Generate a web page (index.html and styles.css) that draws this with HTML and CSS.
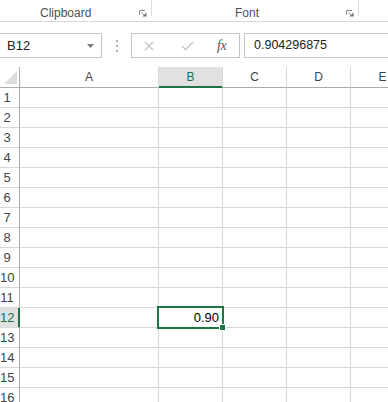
FILE: index.html
```html
<!DOCTYPE html>
<html>
<head>
<meta charset="utf-8">
<link rel="stylesheet" href="styles.css">
</head>
<body>
<div class="ribbon">
  <div class="group g-clip">
    <span class="glabel">Clipboard</span>
    <svg class="launcher" width="8" height="7" viewBox="0 0 8 7"><path d="M0.5 5 V0.5 H6" fill="none" stroke="#8a8a8a"/><path d="M2.5 2.5 L6 6" stroke="#8a8a8a"/><path d="M7.5 2.5 V6.5 H3.5 Z" fill="#6e6e6e"/></svg>
  </div>
  <div class="sep"></div>
  <div class="group g-font">
    <span class="glabel">Font</span>
    <svg class="launcher" width="8" height="7" viewBox="0 0 8 7"><path d="M0.5 5 V0.5 H6" fill="none" stroke="#8a8a8a"/><path d="M2.5 2.5 L6 6" stroke="#8a8a8a"/><path d="M7.5 2.5 V6.5 H3.5 Z" fill="#6e6e6e"/></svg>
  </div>
  <div class="sep"></div>
</div>

<div class="fbar">
  <div class="namebox">
    <span class="nbtext">B12</span>
    <svg class="nbarrow" width="7" height="4" viewBox="0 0 7 4"><path d="M0 0 H7 L3.5 4 Z" fill="#7a7a7a"/></svg>
  </div>
  <div class="dots"><span></span><span></span><span></span></div>
  <div class="fbtns">
    <svg class="ico" width="10" height="10" viewBox="0 0 10 10"><path d="M1 1 L9 9 M9 1 L1 9" stroke="#c4c4c4" stroke-width="1.3" fill="none"/></svg>
    <svg class="ico" width="13" height="10" viewBox="0 0 13 10"><path d="M1 5 L4.5 8.5 L12 1" stroke="#c4c4c4" stroke-width="1.4" fill="none"/></svg>
    <span class="fx">fx</span>
  </div>
  <div class="finput">0.904296875</div>
</div>

<div class="grid">
  <div class="corner"><svg width="19" height="20" viewBox="0 0 19 20"><path d="M17 4 V17 H4 Z" fill="#dcdcdc"/></svg></div>
  <div class="ch">A</div><div class="ch sel">B</div><div class="ch">C</div><div class="ch">D</div><div class="ch">E</div>

  <div class="rh">1</div><div class="c"></div><div class="c"></div><div class="c"></div><div class="c"></div><div class="c"></div>
  <div class="rh">2</div><div class="c"></div><div class="c"></div><div class="c"></div><div class="c"></div><div class="c"></div>
  <div class="rh">3</div><div class="c"></div><div class="c"></div><div class="c"></div><div class="c"></div><div class="c"></div>
  <div class="rh">4</div><div class="c"></div><div class="c"></div><div class="c"></div><div class="c"></div><div class="c"></div>
  <div class="rh">5</div><div class="c"></div><div class="c"></div><div class="c"></div><div class="c"></div><div class="c"></div>
  <div class="rh">6</div><div class="c"></div><div class="c"></div><div class="c"></div><div class="c"></div><div class="c"></div>
  <div class="rh">7</div><div class="c"></div><div class="c"></div><div class="c"></div><div class="c"></div><div class="c"></div>
  <div class="rh">8</div><div class="c"></div><div class="c"></div><div class="c"></div><div class="c"></div><div class="c"></div>
  <div class="rh">9</div><div class="c"></div><div class="c"></div><div class="c"></div><div class="c"></div><div class="c"></div>
  <div class="rh">10</div><div class="c"></div><div class="c"></div><div class="c"></div><div class="c"></div><div class="c"></div>
  <div class="rh">11</div><div class="c"></div><div class="c"></div><div class="c"></div><div class="c"></div><div class="c"></div>
  <div class="rh sel">12</div><div class="c"></div><div class="c active">0.90<span class="handle"></span></div><div class="c"></div><div class="c"></div><div class="c"></div>
  <div class="rh">13</div><div class="c"></div><div class="c"></div><div class="c"></div><div class="c"></div><div class="c"></div>
  <div class="rh">14</div><div class="c"></div><div class="c"></div><div class="c"></div><div class="c"></div><div class="c"></div>
  <div class="rh">15</div><div class="c"></div><div class="c"></div><div class="c"></div><div class="c"></div><div class="c"></div>
  <div class="rh">16</div><div class="c"></div><div class="c"></div><div class="c"></div><div class="c"></div><div class="c"></div>
</div>
</body>
</html>
```
FILE: styles.css
```css
html, body {
  margin: 0;
  padding: 0;
  background: #ffffff;
  overflow: hidden;
  width: 388px;
  height: 402px;
}
body {
  font-family: "Liberation Sans", Arial, sans-serif;
  color: #444;
}

/* ribbon */
.ribbon {
  display: flex;
  height: 21px;
  border-bottom: 1px solid #d6d6d6;
}
.group {
  display: flex;
  align-items: flex-start;
  box-sizing: border-box;
  height: 21px;
}
.g-clip { width: 151px; padding-left: 40px; }
.g-font { width: 206px; padding-left: 83px; }
.glabel {
  font-size: 12px;
  line-height: 14px;
  margin-top: 6px;
  color: #505050;
}
.launcher {
  margin-left: auto;
  margin-right: 4px;
  margin-top: 10px;
}
.sep {
  width: 1px;
  height: 16px;
  background: #dadada;
}

/* formula bar */
.fbar {
  display: flex;
  margin-top: 11px;
  height: 25px;
}
.namebox {
  box-sizing: border-box;
  width: 103px;
  margin-left: -1px;
  border: 1px solid #c6c6c6;
  display: flex;
  align-items: center;
  padding-left: 7px;
  padding-right: 7px;
}
.nbtext {
  font-size: 13px;
  color: #222;
}
.nbarrow { margin-left: auto; }
.dots {
  width: 29px;
  display: flex;
  flex-direction: column;
  align-items: center;
  justify-content: center;
  gap: 3px;
}
.dots span {
  width: 2px;
  height: 2px;
  background: #b0b0b0;
}
.fbtns {
  box-sizing: border-box;
  width: 109px;
  border: 1px solid #c6c6c6;
  display: flex;
  align-items: center;
  padding-left: 12px;
}
.fbtns .ico:nth-child(1) { margin-right: 27px; }
.fbtns .ico:nth-child(2) { margin-right: 23px; }
.fx {
  font-family: "Liberation Serif", "Times New Roman", serif;
  font-style: italic;
  font-size: 14px;
  color: #555;
  letter-spacing: -0.5px;
}
.finput {
  flex: 1;
  margin-left: 4px;
  margin-right: -1px;
  border: 1px solid #c6c6c6;
  font-size: 12.5px;
  line-height: 23px;
  padding-left: 9px;
  color: #222;
}

/* grid */
.grid {
  margin-top: 9px;
  display: grid;
  grid-template-columns: 20px 139px 64px 64px 64px 64px;
  grid-template-rows: 21px repeat(16, 20px);
}
.grid > div {
  box-sizing: border-box;
  border-right: 1px solid #d8d8d8;
  border-bottom: 1px solid #d8d8d8;
}
.corner {
  border-right-color: #ababab !important;
  border-bottom-color: #ababab !important;
}
.corner svg { display: block; }
.ch {
  border-bottom-color: #ababab !important;
  font-size: 12px;
  line-height: 20px;
  text-align: center;
  color: #444;
}
.ch.sel {
  background: #e1e1e1;
  color: #217346;
  border-bottom-color: #217346 !important;
  box-shadow: inset 0 -1px 0 #217346;
}
.rh {
  border-right-color: #ababab !important;
  font-size: 13px;
  line-height: 19px;
  padding-right: 5px;
  text-align: center;
  white-space: nowrap;
  color: #444;
}
.rh.sel {
  background: #e1e1e1;
  color: #217346;
  border-right-color: #217346 !important;
  box-shadow: inset -1px 0 0 #217346;
}
.c.active {
  position: relative;
  font-size: 13px;
  line-height: 19px;
  text-align: right;
  padding-right: 3px;
  color: #000;
}
.c.active::before {
  content: "";
  position: absolute;
  top: -2px;
  left: -2px;
  right: -2px;
  bottom: -2px;
  border: 2px solid #217346;
  pointer-events: none;
}
.handle {
  position: absolute;
  right: -4px;
  bottom: -4px;
  width: 5px;
  height: 5px;
  background: #217346;
  border: 1px solid #ffffff;
  z-index: 2;
}
```
